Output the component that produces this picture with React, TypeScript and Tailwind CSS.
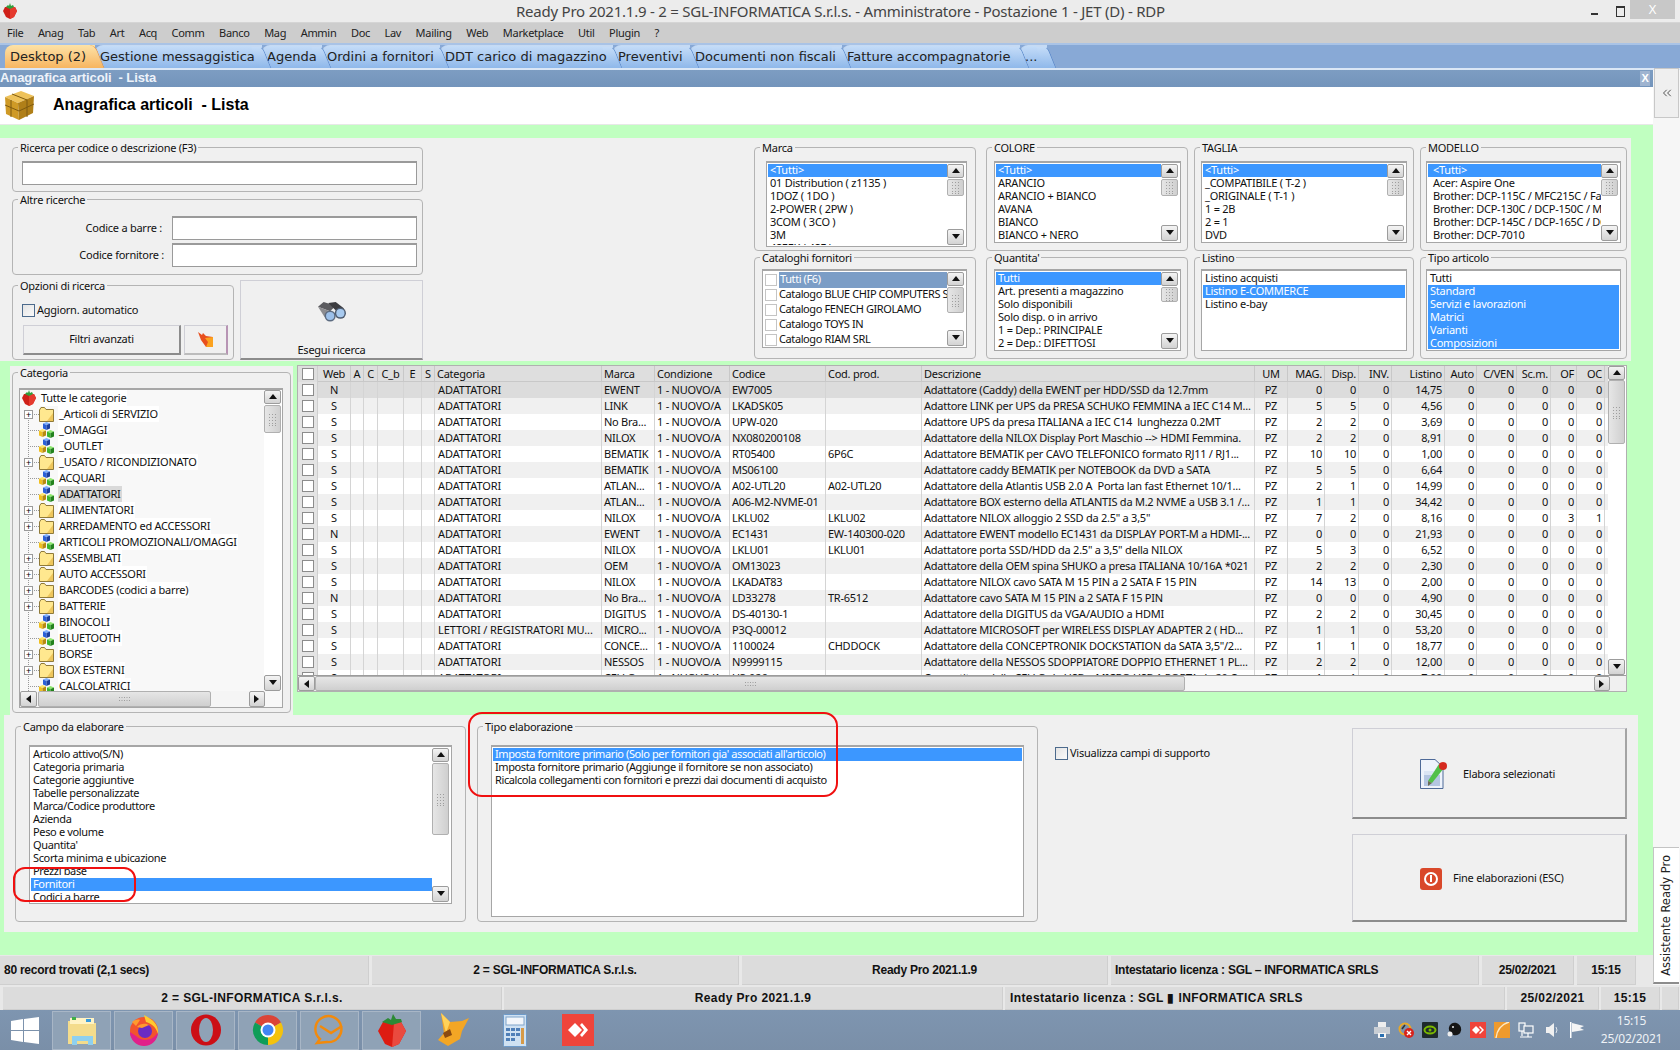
import React from "react";
import { ChevronsLeft } from "lucide-react";

const SEL = "bg-[#3c97ff] text-white";
const ARIAL = "[font-family:'Liberation_Sans',Arial,sans-serif]";

const menus = ["File", "Anag", "Tab", "Art", "Acq", "Comm", "Banco", "Mag", "Ammin", "Doc", "Lav", "Mailing", "Web", "Marketplace", "Util", "Plugin", "?"];

const tabs = [
  { t: "Gestione messaggistica", w: "w-[167px] z-[8]" },
  { t: "Agenda", w: "w-[60px] z-[7]" },
  { t: "Ordini a fornitori", w: "w-[118px] z-[6]" },
  { t: "DDT carico di magazzino", w: "w-[173px] z-[5]" },
  { t: "Preventivi", w: "w-[77px] z-[4]" },
  { t: "Documenti non fiscali", w: "w-[152px] z-[3]" },
  { t: "Fatture accompagnatorie", w: "w-[178px] z-[2]" },
  { t: "...", w: "w-[27px] z-[1]" },
];

const treeItems: [string, boolean][] = [
  ["_Articoli di SERVIZIO", true],
  ["_OMAGGI", false],
  ["_OUTLET", false],
  ["_USATO / RICONDIZIONATO", true],
  ["ACQUARI", false],
  ["ADATTATORI", false],
  ["ALIMENTATORI", true],
  ["ARREDAMENTO ed ACCESSORI", true],
  ["ARTICOLI PROMOZIONALI/OMAGGI", false],
  ["ASSEMBLATI", true],
  ["AUTO ACCESSORI", true],
  ["BARCODES (codici a barre)", true],
  ["BATTERIE", true],
  ["BINOCOLI", false],
  ["BLUETOOTH", false],
  ["BORSE", true],
  ["BOX ESTERNI", true],
  ["CALCOLATRICI", false],
];

// web, categoria, marca, codice, cod.prod, descrizione, mag, disp, listino, of, oc
const rows: string[][] = [
  ["N", "ADATTATORI", "EWENT", "EW7005", "", "Adattatore (Caddy) della EWENT per HDD/SSD da 12.7mm", "0", "0", "14,75", "0", "0"],
  ["S", "ADATTATORI", "LINK", "LKADSK05", "", "Adattore LINK per UPS da PRESA SCHUKO FEMMINA a IEC C14 M...", "5", "5", "4,56", "0", "0"],
  ["S", "ADATTATORI", "No Bra...", "UPW-020", "", "Adattore UPS da presa ITALIANA a IEC C14  lunghezza 0.2MT", "2", "2", "3,69", "0", "0"],
  ["S", "ADATTATORI", "NILOX", "NX080200108", "", "Adattatore della NILOX Display Port Maschio --> HDMI Femmina.", "2", "2", "8,91", "0", "0"],
  ["S", "ADATTATORI", "BEMATIK", "RT05400", "6P6C", "Adattatore BEMATIK per CAVO TELEFONICO formato RJ11 / RJ1...", "10", "10", "1,00", "0", "0"],
  ["S", "ADATTATORI", "BEMATIK", "MS06100", "", "Adattatore caddy BEMATIK per NOTEBOOK da DVD a SATA", "5", "5", "6,64", "0", "0"],
  ["S", "ADATTATORI", "ATLAN...", "A02-UTL20", "A02-UTL20", "Adattatore della Atlantis USB 2.0 A  Porta lan fast Ethernet 10/1...", "2", "1", "14,99", "0", "0"],
  ["S", "ADATTATORI", "ATLAN...", "A06-M2-NVME-01", "", "Adattatore BOX esterno della ATLANTIS da M.2 NVME a USB 3.1 /...", "1", "1", "34,42", "0", "0"],
  ["S", "ADATTATORI", "NILOX", "LKLU02", "LKLU02", 'Adattatore NILOX alloggio 2 SSD da 2.5" a 3,5"', "7", "2", "8,16", "3", "1"],
  ["N", "ADATTATORI", "EWENT", "EC1431", "EW-140300-020", "Adattatore EWENT modello EC1431 da DISPLAY PORT-M a HDMI-...", "0", "0", "21,93", "0", "0"],
  ["S", "ADATTATORI", "NILOX", "LKLU01", "LKLU01", 'Adattatore porta SSD/HDD da 2.5" a 3,5" della NILOX', "5", "3", "6,52", "0", "0"],
  ["S", "ADATTATORI", "OEM", "OM13023", "", "Adattatore della OEM spina SHUKO a presa ITALIANA 10/16A *021", "2", "2", "2,30", "0", "0"],
  ["S", "ADATTATORI", "NILOX", "LKADAT83", "", "Adattatore NILOX cavo SATA M 15 PIN a 2 SATA F 15 PIN", "14", "13", "2,00", "0", "0"],
  ["N", "ADATTATORI", "No Bra...", "LD33278", "TR-6512", "Adattatore cavo SATA M 15 PIN a 2 SATA F 15 PIN", "0", "0", "4,90", "0", "0"],
  ["S", "ADATTATORI", "DIGITUS", "DS-40130-1", "", "Adattatore della DIGITUS da VGA/AUDIO a HDMI", "2", "2", "30,45", "0", "0"],
  ["S", "LETTORI / REGISTRATORI MU...", "MICRO...", "P3Q-00012", "", "Adattatore MICROSOFT per WIRELESS DISPLAY ADAPTER 2 ( HD...", "1", "1", "53,20", "0", "0"],
  ["S", "ADATTATORI", "CONCE...", "1100024", "CHDDOCK", 'Adattatore della CONCEPTRONIK DOCKSTATION da SATA 3,5"/2...', "1", "1", "18,77", "0", "0"],
  ["S", "ADATTATORI", "NESSOS", "N9999115", "", "Adattatore della NESSOS SDOPPIATORE DOPPIO ETHERNET 1 PL...", "2", "2", "12,00", "0", "0"],
  ["S", "ADATTATORI", "CELLO", "U3-026", "", "Convertitore della CELLO da USB a MICRO USB 1 PORTA da 20 C...", "1", "1", "7,00", "0", "0"],
];

const COLS = "grid grid-cols-[33px_13px_14px_26px_18px_13px_167px_53px_75px_96px_96px_333px_33px_37px_34px_33px_53px_32px_40px_34px_26px_28px]";

const Grip = ({ vertical }: { vertical?: boolean }) => (
  <svg width={vertical ? 9 : 13} height={vertical ? 13 : 6} className="opacity-60">
    {(vertical ? [1, 4, 7] : [1, 3.5, 6, 8.5, 11]).map((x) =>
      (vertical ? [1, 4, 7, 10, 12] : [1, 4]).map((y) => <rect key={x + "-" + y} x={x} y={y} width="1" height="1" fill="#777" />)
    )}
  </svg>
);

const Arrow = ({ dir }: { dir: "up" | "down" | "left" | "right" }) => {
  const p = {
    up: "0,6 8,6 4,1",
    down: "0,1 8,1 4,6",
    left: "6,0 6,8 1,4",
    right: "1,0 1,8 6,4",
  }[dir];
  return (
    <svg width="8" height="8" viewBox="0 0 8 8">
      <polygon points={p} fill="#111" />
    </svg>
  );
};

const SBtn = ({ dir, className }: { dir: "up" | "down" | "left" | "right"; className: string }) => (
  <div className={"flex shrink-0 items-center justify-center rounded-[2px] border border-[#9c9c9c] bg-gradient-to-b from-[#f4f4f4] to-[#d3d3d3] " + className}>
    <Arrow dir={dir} />
  </div>
);

const VScroll = ({ thumb }: { thumb: string }) => (
  <div className="flex w-[18px] shrink-0 flex-col bg-white">
    <SBtn dir="up" className="h-[14px] w-[17px]" />
    <div className={"flex w-[17px] items-center justify-center rounded-[2px] border border-[#b0b0b0] bg-gradient-to-r from-[#e6e6e6] to-[#cfcfcf] " + thumb}>
      <Grip vertical />
    </div>
    <div className="flex-1" />
    <SBtn dir="down" className="h-[16px] w-[17px]" />
  </div>
);

const HScroll = ({ thumb, className }: { thumb: string; className: string }) => (
  <div className={"flex items-center bg-[#f5f5f5] " + className}>
    <SBtn dir="left" className="h-full w-[17px]" />
    <div className={"flex h-full items-center justify-center rounded-[2px] border border-[#b0b0b0] bg-gradient-to-b from-[#e6e6e6] to-[#cfcfcf] " + thumb}>
      <Grip />
    </div>
    <div className="flex-1" />
    <SBtn dir="right" className="h-full w-[16px]" />
  </div>
);

const ListBox = ({
  items,
  sel = [],
  className,
  thumb,
  pad = "pl-[2px]",
}: {
  items: string[];
  sel?: number[];
  className: string;
  thumb?: string;
  pad?: string;
}) => (
  <div className={"flex overflow-hidden border border-[#a6a6a6] border-t-2 bg-white p-[1px] " + className}>
    <div className="min-w-0 flex-1 overflow-hidden">
      {items.map((it, i) => (
        <div key={i} className={"h-[13px] whitespace-pre leading-[12px] " + pad + " " + (sel.includes(i) ? SEL : "text-[#111]")}>
          {it}
        </div>
      ))}
    </div>
    {thumb && <VScroll thumb={thumb} />}
  </div>
);

const Group = ({ title, className, children }: { title: string; className: string; children?: React.ReactNode }) => (
  <fieldset className={"rounded-[4px] border border-[#b4b4b4] " + className}>
    <legend className="ml-[5px] px-[2px] leading-[13px] text-[#111]">{title}</legend>
    {children}
  </fieldset>
);

const CheckOutline = () => <span className="block h-[13px] w-[13px] shrink-0 border border-[#4c6a8c] bg-gradient-to-br from-[#e4e4e4] to-[#fafafa]" />;

const Strawberry = ({ s = 16 }: { s?: number }) => (
  <svg width={s} height={s} viewBox="0 0 16 16">
    <polygon points="3,4 13,4 15,8 12,14 8,16 4,14 1,8" fill="#cf2018" />
    <polygon points="8,4 13,4 15,8 12,14 8,16" fill="#e53a2e" />
    <polygon points="4,4 6,2 7,3 8,0 9,3 11,2 12,4 8,6" fill="#2f9e3b" />
  </svg>
);

const BoxIcon = () => (
  <svg width="32" height="31" viewBox="0 0 32 31">
    <polygon points="2,7 18,1 31,6 15,13" fill="#eec25a" />
    <polygon points="2,7 15,13 16,30 3,24" fill="#cf9a26" />
    <polygon points="15,13 31,6 30,23 16,30" fill="#b07f18" />
    <path d="M9 4 L24 10 L24 27 M2 15 L16 21 L31 14 M8 10 L8 27" fill="none" stroke="#7e5a10" strokeWidth="1" />
  </svg>
);

const Binoculars = () => (
  <svg width="32" height="22" viewBox="0 0 32 22">
    <polygon points="1,5 7,0 20,4 14,10" fill="#5b5b5f" />
    <polygon points="12,1 20,0 29,7 22,11" fill="#3c3c40" />
    <polygon points="1,5 14,10 18,17 8,16" fill="#8c8c90" />
    <circle cx="14" cy="15" r="6" fill="#5c6b80" />
    <circle cx="14" cy="15" r="4.4" fill="#9cc0ea" />
    <circle cx="25" cy="12" r="6" fill="#4f5d72" />
    <circle cx="25" cy="12" r="4.4" fill="#a8caef" />
  </svg>
);

const FlameArrow = () => (
  <svg width="16" height="15" viewBox="0 0 16 15">
    <polygon points="0,0 4,3 5,1 8,4 15,5 15,15 8,15 3,8" fill="#e84f1e" />
    <polygon points="7,6 15,5 15,15 8,15 10,10" fill="#fba21f" />
  </svg>
);

const FolderIcon = () => (
  <svg width="15" height="15" viewBox="0 0 15 15">
    <path d="M0.5 3 L0.5 14.5 L14.5 14.5 L14.5 2.5 L7 2.5 L5.5 0.5 L2 0.5 Z" fill="#ffe88f" stroke="#8f7a3a" strokeWidth="1" />
    <polygon points="8,14 14,14 14,6" fill="#eec65c" />
  </svg>
);

const Cube = ({ x, y, top, left, right }: { x: number; y: number; top: string; left: string; right: string }) => (
  <g transform={`translate(${x} ${y})`}>
    <polygon points="0,1.5 3.5,0 7,1.5 3.5,3" fill={top} />
    <polygon points="0,1.5 3.5,3 3.5,8 0,6.5" fill={left} />
    <polygon points="3.5,3 7,1.5 7,6.5 3.5,8" fill={right} />
  </g>
);

const Cubes = () => (
  <svg width="15" height="16" viewBox="0 0 15 16">
    <Cube x={4} y={0} top="#7fb0ff" left="#2a60d8" right="#1c3f9e" />
    <Cube x={0} y={7} top="#ffe56a" left="#f0c020" right="#b88a10" />
    <Cube x={8} y={8} top="#8fe870" left="#3db52f" right="#22821c" />
  </svg>
);

const DocPencil = () => (
  <svg width="28" height="30" viewBox="0 0 28 30">
    <path d="M0.5 0.5 L15 0.5 L23 8 L23 29.5 L0.5 29.5 Z" fill="#eef3fb" stroke="#4e6a98" />
    <rect x="4" y="12" width="16" height="15" fill="#b4c6e2" />
    <rect x="4" y="12" width="16" height="4" fill="#dbe5f4" />
    <polygon points="19,5 24,9 12,24 8,22" fill="#52c04a" />
    <polygon points="8,22 12,24 8,27" fill="#6b6b55" />
    <circle cx="23" cy="7" r="4" fill="#d52a1e" />
  </svg>
);

const PowerBtn = () => (
  <svg width="22" height="22" viewBox="0 0 22 22">
    <rect width="22" height="22" rx="3" fill="#d9482a" />
    <circle cx="11" cy="11" r="6" fill="none" stroke="#fff" strokeWidth="2" />
    <rect x="10" y="7" width="2" height="7" fill="#fff" />
  </svg>
);

const TaskBtn = ({ children }: { children: React.ReactNode }) => (
  <div className="flex h-[39px] w-[59px] items-center justify-center border border-[#a8b6c6] bg-[#8fa2b6]">{children}</div>
);

const Tray = ({ children }: { children: React.ReactNode }) => <div className="flex h-4 w-4 items-center justify-center">{children}</div>;

const StatusCell = ({ w, children, className = "justify-center" }: { w: string; children?: React.ReactNode; className?: string }) => (
  <div className={"flex h-full items-center bg-[#dcdcdc] border-b border-r border-[#cfcfcf] text-[12px] font-bold text-[#111] " + ARIAL + " " + w + " " + className}>{children}</div>
);

export default function App() {
  return (
    <div className="relative flex h-[1050px] w-[1680px] flex-col overflow-hidden bg-[#ececec] [font-family:'Noto_Sans',sans-serif] text-[11px] tracking-[-0.25px] text-[#111]">
      {/* Titolo finestra */}
      <div className="flex h-[22px] shrink-0 items-center bg-[#ececec]">
        <div className="ml-[2px] w-[514px]">
          <Strawberry />
        </div>
        <div className="w-[1075px] whitespace-nowrap text-[15px] tracking-[-0.23px] text-[#444]">Ready Pro 2021.1.9 - 2 = SGL-INFORMATICA S.r.l.s. - Amministratore - Postazione 1 - JET (D) - RDP</div>
        <div className="mt-[6px] h-[2px] w-[7px] bg-[#333]" />
        <div className="ml-[18px] h-[11px] w-[9px] border border-t-2 border-[#333]" />
        <div className={"ml-[5px] flex h-[19px] w-[45px] self-start items-center justify-center bg-[#c8c8c8] text-[12px] text-white " + ARIAL}>X</div>
      </div>
      {/* Menu */}
      <div className="flex h-[21px] shrink-0 items-center gap-[14.5px] border-t border-[#d5d5d5] bg-[#cdcdcd] pl-[7px] text-[11px] tracking-[-0.3px] text-[#222]">
        {menus.map((m) => (
          <span key={m}>{m}</span>
        ))}
      </div>
      {/* Tabs */}
      <div className="flex h-[27px] shrink-0 items-end border-t-2 border-b-2 border-t-[#a9c3e6] border-b-[#dbe7f6] bg-[#88a9d6] pl-[5px] [font-family:'DejaVu_Sans',sans-serif] text-[13px] tracking-normal">
        <div className="relative z-[9] flex h-[23px] w-[90px] items-center rounded-tl-[8px] bg-gradient-to-b from-[#fde2a6] to-[#f7b560] pl-[5px] text-[#222] after:absolute after:inset-y-0 after:right-[-5px] after:w-[12px] after:skew-x-[22deg] after:rounded-tr-[6px] after:border-r after:border-[#e8974a] after:bg-gradient-to-b after:from-[#fde2a6] after:to-[#f7b560] after:content-['']">
          <span className="relative z-10 whitespace-nowrap">Desktop (2)</span>
        </div>
        {tabs.map((t) => (
          <div key={t.t} className={"relative flex h-[23px] items-center rounded-tl-[8px] border-t border-[#c6daf3] bg-gradient-to-b from-[#c4dcf8] to-[#8fb8ea] pl-[5px] text-[#222] after:absolute after:inset-y-0 after:right-[-5px] after:w-[12px] after:skew-x-[22deg] after:rounded-tr-[6px] after:border-r after:border-t after:border-[#5f8ccc] after:border-t-[#c6daf3] after:bg-gradient-to-b after:from-[#c4dcf8] after:to-[#8fb8ea] after:content-[''] " + t.w}>
            <span className="relative z-10 whitespace-nowrap">{t.t}</span>
          </div>
        ))}
      </div>

      <div className="flex h-[915px] shrink-0 bg-white">
        <div className="flex w-[1653px] flex-col">
          {/* Testata */}
          <div className={"flex h-[17px] shrink-0 items-center justify-between bg-gradient-to-b from-[#7d9dc2] to-[#7394bb] pb-[1px] text-[13px] font-bold tracking-[-0.1px] text-[#eef3fa] " + ARIAL}>
            <span className="whitespace-pre">Anagrafica articoli  - Lista</span>
            <span className="mr-[3px] h-[15px] w-[10px] bg-[#9fb4d0] text-center text-[11px] leading-[15px] text-white">X</span>
          </div>
          <div className="flex h-[38px] shrink-0 items-center border-b border-[#e8e8e8] bg-white pb-[1px] pl-[3px]">
            <BoxIcon />
            <span className={"ml-[18px] whitespace-pre text-[16px] font-bold tracking-normal text-black " + ARIAL}>Anagrafica articoli  - Lista</span>
          </div>

          <div className="flex flex-1 flex-col bg-[#c0ffc0]">
            {/* Filtri */}
            <div className="mt-[13px] flex h-[223px] w-[1631px] shrink-0 bg-[#f0f0f0] pl-[12px] pt-[3px]">
              <div className="flex w-[411px] shrink-0 flex-col">
                <Group title="Ricerca per codice o descrizione (F3)" className="h-[51px] w-[411px]">
                  <input readOnly className="ml-[9px] mt-[7px] block h-[24px] w-[395px] border border-[#9a9a9a] border-t-2 bg-white" />
                </Group>
                <Group title="Altre ricerche" className="mt-[1px] h-[82px] w-[411px]">
                  <div className="mt-[10px] flex items-center justify-end pr-[5px]">
                    <span className="mr-[10px]">Codice a barre :</span>
                    <input readOnly className="h-[24px] w-[245px] border border-[#9a9a9a] border-t-2 bg-white" />
                  </div>
                  <div className="mt-[3px] flex items-center justify-end pr-[5px]">
                    <span className="mr-[8px]">Codice fornitore :</span>
                    <input readOnly className="h-[24px] w-[245px] border border-[#9a9a9a] border-t-2 bg-white" />
                  </div>
                </Group>
                <div className="mt-[4px] flex">
                  <Group title="Opzioni di ricerca" className="h-[81px] w-[222px]">
                    <div className="ml-[9px] mt-[10px] flex items-center gap-[2px]">
                      <CheckOutline />
                      <span>Aggiorn. automatico</span>
                    </div>
                    <div className="ml-[10px] mt-[6px] flex gap-[3px]">
                      <div className="flex h-[30px] w-[158px] items-center justify-center border border-[#cfcfd6] border-b-2 border-r-2 border-b-[#8c8c8c] border-r-[#8c8c8c]">Filtri avanzati</div>
                      <div className="flex h-[30px] w-[44px] items-center justify-center border border-[#cfcfd6] border-b-2 border-r-2 border-b-[#bcbcbc] border-r-[#b794b4]">
                        <FlameArrow />
                      </div>
                    </div>
                  </Group>
                  <div className="ml-[6px] mt-[1px] flex h-[80px] w-[183px] flex-col items-center border border-[#cfcfd6] border-b-2 border-b-[#8c8c8c] pt-[21px]">
                    <Binoculars />
                    <span className="mt-[19px]">Esegui ricerca</span>
                  </div>
                </div>
              </div>

              <div className="ml-[331px] flex flex-col">
                <div className="flex">
                  <Group title="Marca" className="h-[110px] w-[222px]">
                    <ListBox className="ml-[11px] mt-[7px] h-[86px] w-[201px]" thumb="mt-[1px] h-[17px]" sel={[0]} items={["<Tutti>", "01 Distribution ( z1135 )", "1DOZ ( 1DO )", "2-POWER ( 2PW )", "3COM ( 3CO )", "3M", "4SEEK ( 4SE )"]} />
                  </Group>
                  <Group title="COLORE" className="ml-[10px] h-[110px] w-[202px]">
                    <ListBox className="ml-[7px] mt-[7px] h-[82px] w-[187px]" thumb="mt-[1px] h-[17px]" sel={[0]} items={["<Tutti>", "ARANCIO", "ARANCIO + BIANCO", "AVANA", "BIANCO", "BIANCO + NERO"]} />
                  </Group>
                  <Group title="TAGLIA" className="ml-[6px] h-[110px] w-[220px]">
                    <ListBox className="ml-[6px] mt-[7px] h-[82px] w-[206px]" thumb="mt-[1px] h-[17px]" sel={[0]} items={["<Tutti>", "_COMPATIBILE ( T-2 )", "_ORIGINALE ( T-1 )", "1 = 2B", "2 = 1", "DVD"]} />
                  </Group>
                  <Group title="MODELLO" className="ml-[6px] h-[110px] w-[207px]">
                    <ListBox className="ml-[5px] mt-[7px] h-[82px] w-[195px]" thumb="mt-[1px] h-[17px]" sel={[0]} pad="pl-[5px]" items={["<Tutti>", "Acer: Aspire One", "Brother: DCP-115C / MFC215C / Fax", "Brother: DCP-130C / DCP-150C / MFC", "Brother: DCP-145C / DCP-165C / DCP", "Brother: DCP-7010"]} />
                  </Group>
                </div>
                <div className="flex">
                  <Group title="Cataloghi fornitori" className="h-[108px] w-[222px]">
                    <div className="ml-[7px] mt-[5px] flex h-[79px] w-[205px] overflow-hidden border border-[#a6a6a6] border-t-2 bg-white p-[1px]">
                      <div className="min-w-0 flex-1 overflow-hidden pl-[1px] tracking-[-0.4px]">
                        {["Tutti (F6)", "Catalogo BLUE CHIP COMPUTERS S", "Catalogo FENECH GIROLAMO", "Catalogo TOYS IN", "Catalogo RIAM SRL"].map((c, i) => (
                          <div key={c} className="flex h-[15px] items-center gap-[2px] whitespace-nowrap">
                            <span className="h-[12px] w-[12px] shrink-0 border border-[#c4c4c4] bg-white" />
                            <span className={i === 0 ? "flex-1 bg-[#7b9dc6] pl-[1px] text-white" : ""}>{c}</span>
                          </div>
                        ))}
                      </div>
                      <VScroll thumb="mt-[1px] h-[26px]" />
                    </div>
                  </Group>
                  <Group title="Quantita'" className="ml-[10px] h-[108px] w-[202px]">
                    <ListBox className="ml-[7px] mt-[5px] h-[82px] w-[187px]" thumb="mt-[1px] h-[15px]" sel={[0]} items={["Tutti", "Art. presenti a magazzino", "Solo disponibili", "Solo disp. o in arrivo", "1 = Dep.: PRINCIPALE", "2 = Dep.: DIFETTOSI"]} />
                  </Group>
                  <Group title="Listino" className="ml-[6px] h-[108px] w-[220px]">
                    <ListBox className="ml-[6px] mt-[5px] h-[82px] w-[206px]" sel={[1]} items={["Listino acquisti", "Listino E-COMMERCE", "Listino e-bay"]} />
                  </Group>
                  <Group title="Tipo articolo" className="ml-[6px] h-[108px] w-[207px]">
                    <ListBox className="ml-[5px] mt-[5px] h-[82px] w-[195px]" sel={[1, 2, 3, 4, 5]} items={["Tutti", "Standard", "Servizi e lavorazioni", "Matrici", "Varianti", "Composizioni"]} />
                  </Group>
                </div>
              </div>
            </div>

            {/* Categorie + griglia */}
            <div className="mt-[4px] flex h-[350px] shrink-0">
              <div className="ml-[10px] mt-[1px] h-[349px] w-[283px] bg-[#f0f0f0] pl-[2px]">
                <Group title="Categoria" className="h-[347px] w-[279px]">
                  <div className="ml-[6px] mt-[9px] flex h-[320px] w-[264px] flex-col overflow-hidden border border-[#a6a6a6] border-t-2 bg-[#f8f8f8]">
                    <div className="flex min-h-0 flex-1 overflow-hidden">
                      <div className="relative min-w-0 flex-1">
                        <div className="absolute bottom-0 left-[8px] top-[20px] border-l border-dotted border-[#999]" />
                        <div className="flex h-4 items-center pl-[1px]">
                          <Strawberry s={16} />
                          <span className="ml-[3px] bg-white px-[1px]">Tutte le categorie</span>
                        </div>
                        {treeItems.map(([t, folder]) => (
                          <div key={t} className="flex h-4 items-center">
                            <div className="relative flex w-[19px] shrink-0 items-center">
                              <span className="ml-[8px] w-[11px] border-t border-dotted border-[#999]" />
                              {folder && <span className="absolute left-[4px] top-[-4px] flex h-[9px] w-[9px] items-center justify-center border border-[#9a9a9a] bg-white text-[9px] leading-none text-black">+</span>}
                            </div>
                            {folder ? <FolderIcon /> : <Cubes />}
                            <span className={"ml-[4px] whitespace-nowrap px-[1px] " + (t === "ADATTATORI" ? "bg-[#d9d9d9]" : "bg-white")}>{t}</span>
                          </div>
                        ))}
                      </div>
                      <VScroll thumb="mt-[1px] h-[28px]" />
                    </div>
                    <HScroll className="h-[16px] w-[245px] shrink-0" thumb="ml-[1px] w-[173px]" />
                  </div>
                </Group>
              </div>

              <div className="ml-[4px] flex h-[327px] w-[1330px] flex-col border border-[#b0b0b0] bg-white">
                <div className="flex h-[309px] shrink-0">
                  <div className="h-full w-[1312px] overflow-hidden">
                    <div className="flex h-[16px] bg-[#dedede]">
                      <div className="flex w-[20px] shrink-0 items-center justify-center border-r border-[#cfcfcf]">
                        <span className="h-[12px] w-[12px] border border-[#8c8c8c] bg-white" />
                      </div>
                      <div className={COLS}>
                        {["Web", "A", "C", "C_b", "E", "S", "Categoria", "Marca", "Condizione", "Codice", "Cod. prod.", "Descrizione", "UM", "MAG.", "Disp.", "INV.", "Listino", "Auto", "C/VEN", "Sc.m.", "OF", "OC"].map((h, i) => (
                          <div key={h} className={"overflow-hidden whitespace-nowrap border-r border-b border-[#c8c8c8] leading-[15px] " + (i < 6 || i === 12 ? "text-center" : i > 12 ? "pr-[2px] text-right" : "pl-[2px]")}>
                            {h}
                          </div>
                        ))}
                      </div>
                    </div>
                    {rows.map((r, i) => (
                      <div key={i} className={"flex h-4 " + (i === 0 ? "bg-[#dcdcdc]" : i % 2 === 1 ? "bg-[#f0f0f0]" : "bg-white")}>
                        <div className="flex w-[20px] shrink-0 items-center justify-center border-r border-[#cfcfcf] bg-[#e4e4e4]">
                          <span className="h-[12px] w-[12px] border border-[#8c8c8c] bg-white" />
                        </div>
                        <div className={COLS + " leading-[16px]"}>
                          <div className="border-r border-[#d4d4d4] text-center">{r[0]}</div>
                          <div className="border-r border-[#d4d4d4]" />
                          <div className="border-r border-[#d4d4d4]" />
                          <div className="border-r border-[#d4d4d4]" />
                          <div className="border-r border-[#d4d4d4]" />
                          <div className="border-r border-[#d4d4d4]" />
                          <div className="overflow-hidden whitespace-nowrap border-r border-[#d4d4d4] pl-[3px] tracking-[-0.1px]">{r[1]}</div>
                          <div className="overflow-hidden whitespace-nowrap border-r border-[#d4d4d4] pl-[2px]">{r[2]}</div>
                          <div className="overflow-hidden whitespace-nowrap border-r border-[#d4d4d4] pl-[2px]">1 - NUOVO/A</div>
                          <div className="overflow-hidden whitespace-nowrap border-r border-[#d4d4d4] pl-[2px]">{r[3]}</div>
                          <div className="overflow-hidden whitespace-nowrap border-r border-[#d4d4d4] pl-[2px]">{r[4]}</div>
                          <div className="overflow-hidden whitespace-pre border-r border-[#d4d4d4] pl-[2px]">{r[5]}</div>
                          <div className="border-r border-[#d4d4d4] text-center">PZ</div>
                          <div className="border-r border-[#d4d4d4] pr-[2px] text-right">{r[6]}</div>
                          <div className="border-r border-[#d4d4d4] pr-[2px] text-right">{r[7]}</div>
                          <div className="border-r border-[#d4d4d4] pr-[2px] text-right">0</div>
                          <div className="border-r border-[#d4d4d4] pr-[2px] text-right">{r[8]}</div>
                          <div className="border-r border-[#d4d4d4] pr-[2px] text-right">0</div>
                          <div className="border-r border-[#d4d4d4] pr-[2px] text-right">0</div>
                          <div className="border-r border-[#d4d4d4] pr-[2px] text-right">0</div>
                          <div className="border-r border-[#d4d4d4] pr-[2px] text-right">{r[9]}</div>
                          <div className="border-r border-[#d4d4d4] pr-[2px] text-right">{r[10]}</div>
                        </div>
                      </div>
                    ))}
                  </div>
                  <VScroll thumb="h-[64px]" />
                </div>
                <div className="flex h-[16px] shrink-0 border-t border-[#9c9c9c] bg-[#f0f0f0]">
                  <HScroll className="h-full w-[1312px]" thumb="w-[870px]" />
                </div>
              </div>
            </div>

            {/* Elaborazione */}
            <div className="ml-[4px] flex h-[217px] w-[1634px] shrink-0 bg-[#f0f0f0] pl-[11px] pt-[5px]">
              <Group title="Campo da elaborare" className="h-[202px] w-[451px]">
                <ListBox
                  className="ml-[13px] mt-[12px] h-[159px] w-[423px] tracking-[-0.35px]"
                  thumb="mt-[1px] h-[72px]"
                  sel={[10]}
                  items={["Articolo attivo(S/N)", "Categoria primaria", "Categorie aggiuntive", "Tabelle personalizzate", "Marca/Codice produttore", "Azienda", "Peso e volume", "Quantita'", "Scorta minima e ubicazione", "Prezzi base", "Fornitori", "Codici a barre"]}
                />
              </Group>
              <Group title="Tipo elaborazione" className="ml-[11px] h-[202px] w-[561px]">
                <ListBox
                  className="ml-[13px] mt-[12px] h-[172px] w-[533px] tracking-[-0.4px]"
                  sel={[0]}
                  items={["Imposta fornitore primario (Solo per fornitori gia' associati all'articolo)", "Imposta fornitore primario (Aggiunge il fornitore se non associato)", "Ricalcola collegamenti con fornitori e prezzi dai documenti di acquisto"]}
                />
              </Group>
              <div className="ml-[17px] mt-[27px] flex h-[13px] w-[297px] items-center gap-[2px]">
                <CheckOutline />
                <span>Visualizza campi di supporto</span>
              </div>
              <div className="flex flex-col gap-[15px] pt-[8px]">
                <div className="flex h-[91px] w-[275px] items-center gap-[15px] border border-[#cfcfd6] border-b-2 border-b-[#8c8c8c] border-r-2 border-r-[#a4a4a4] pl-[67px] pt-[2px]">
                  <DocPencil />
                  <span>Elabora selezionati</span>
                </div>
                <div className="flex h-[88px] w-[275px] items-center gap-[11px] border border-[#cfcfd6] border-b-2 border-b-[#8c8c8c] border-r-2 border-r-[#a4a4a4] pl-[67px] pt-[2px]">
                  <PowerBtn />
                  <span>Fine elaborazioni (ESC)</span>
                </div>
              </div>
            </div>
            <div className="flex-1" />
          </div>

          {/* Stato applicazione */}
          <div className="flex h-[30px] shrink-0 gap-[3px] bg-[#e8e8e8] pt-[1px] tracking-[-0.25px]">
            <StatusCell w="w-[369px]" className="justify-start pl-[4px]">80 record trovati (2,1 secs)</StatusCell>
            <StatusCell w="w-[367px]">2 = SGL-INFORMATICA S.r.l.s.</StatusCell>
            <StatusCell w="w-[366px]">Ready Pro 2021.1.9</StatusCell>
            <StatusCell w="w-[368px]" className="justify-start pl-[4px]">Intestatario licenza : SGL – INFORMATICA SRLS</StatusCell>
            <StatusCell w="w-[92px]">25/02/2021</StatusCell>
            <StatusCell w="w-[59px]">15:15</StatusCell>
          </div>
        </div>

        {/* Colonna destra */}
        <div className="flex w-[27px] flex-col bg-[#f6f6f6]">
          <div className="-mt-[2px] ml-[1px] flex h-[50px] w-[25px] items-center justify-center border border-[#c8c8c8] bg-[#efefef] text-[#111]">
            <ChevronsLeft size={14} strokeWidth={1.2} />
          </div>
          <div className="flex-1" />
          <div className="flex h-[137px] w-[26px] items-center justify-center border-b-2 border-l border-t border-[#c4c4c4] border-b-[#8c8c8c] bg-white">
            <span className="rotate-180 whitespace-nowrap [writing-mode:vertical-rl] [font-family:'DejaVu_Sans',sans-serif] text-[11.5px] tracking-normal text-[#222]">Assistente Ready Pro</span>
          </div>
          <div className="h-[1px]" />
        </div>
      </div>

      {/* Stato sistema */}
      <div className="flex h-[25px] shrink-0 gap-[2px] bg-[#e8e8e8] pl-[3px] pt-[2px] tracking-[0.4px]">
        <StatusCell w="w-[499px]">2 = SGL-INFORMATICA S.r.l.s.</StatusCell>
        <StatusCell w="w-[499px]">Ready Pro 2021.1.9</StatusCell>
        <StatusCell w="w-[500px]" className="justify-start pl-[5px]">Intestatario licenza : SGL ▮ INFORMATICA SRLS</StatusCell>
        <StatusCell w="w-[92px]">25/02/2021</StatusCell>
        <StatusCell w="w-[59px]">15:15</StatusCell>
        <StatusCell w="w-[17px]" />
      </div>

      {/* Barra applicazioni */}
      <div className="flex h-[40px] shrink-0 items-center bg-gradient-to-b from-[#7e95b0] to-[#7a8fa8] text-white">
        <div className="flex w-[52px] shrink-0 justify-start pl-[11px]">
          <svg width="28" height="27" viewBox="0 0 28 27">
            <polygon points="0,4 12,2 12,13 0,13" fill="#fff" />
            <polygon points="13,2 28,0 28,13 13,13" fill="#fff" />
            <polygon points="0,14 12,14 12,25 0,23" fill="#fff" />
            <polygon points="13,14 28,14 28,27 13,25" fill="#fff" />
          </svg>
        </div>
        <div className="flex gap-[3px]">
          <TaskBtn>
            <svg width="32" height="32" viewBox="0 0 32 32">
              <path d="M2 7 L12 7 L14 9 L30 9 L30 30 L2 30 Z" fill="#f4dc8c" />
              <rect x="4" y="4" width="24" height="6" fill="#fff3c4" />
              <rect x="6" y="3" width="4" height="3" fill="#3fae49" />
              <rect x="20" y="5" width="5" height="3" fill="#3a9bdc" />
              <path d="M6 31 L6 22 L27 22 L27 31 L22 31 L22 27 L11 27 L11 31 Z" fill="#8fd0ef" />
            </svg>
          </TaskBtn>
          <TaskBtn>
            <svg width="32" height="32" viewBox="0 0 32 32">
              <circle cx="16" cy="17" r="14" fill="#f2542d" />
              <path d="M2 18 A14 14 0 0 0 30 18 A14 14 0 0 1 8 22 Z" fill="#e0218a" />
              <path d="M16 1 C24 5 31 10 30 20 C28 12 22 9 18 8 Z" fill="#ffcb2f" />
              <path d="M4 8 C6 6 10 5 12 6 L8 12 Z" fill="#ff9a2e" />
              <circle cx="17" cy="17" r="7" fill="#6a2bc4" />
              <path d="M9 13 C12 9 18 9 21 11 L14 14 Z" fill="#ff9a2e" />
            </svg>
          </TaskBtn>
          <TaskBtn>
            <svg width="32" height="32" viewBox="0 0 32 32">
              <ellipse cx="16" cy="16" rx="15" ry="15.5" fill="#cc0f16" />
              <ellipse cx="16" cy="16" rx="7" ry="12" fill="#8fa2b6" />
            </svg>
          </TaskBtn>
          <TaskBtn>
            <svg width="32" height="32" viewBox="0 0 32 32">
              <path d="M16 16 L3 8.5 A15 15 0 0 1 29 8.5 Z" fill="#db4437" />
              <path d="M16 16 L29 8.5 A15 15 0 0 1 16 31 Z" fill="#f4c20d" />
              <path d="M16 16 L16 31 A15 15 0 0 1 3 8.5 Z" fill="#0f9d58" />
              <circle cx="16" cy="16" r="7.5" fill="#fff" />
              <circle cx="16" cy="16" r="5.5" fill="#4285f4" />
            </svg>
          </TaskBtn>
          <TaskBtn>
            <svg width="32" height="32" viewBox="0 0 32 32" fill="none" stroke="#f28a0c" strokeWidth="2.4">
              <path d="M6 25 A13 13 0 1 1 13 28 L3 29 Z" />
              <path d="M6 12 L17 19 L28 12" />
            </svg>
          </TaskBtn>
          <TaskBtn>
            <svg width="30" height="33" viewBox="0 0 30 33">
              <polygon points="6,8 24,8 29,17 22,30 15,33 8,30 1,17" fill="#dd1c12" />
              <polygon points="17,9 24,8 29,17 22,30 15,33" fill="#ea4a3f" />
              <polygon points="5,8 11,4 14,6 16,0 19,5 24,5 25,8 15,11" fill="#2c8a35" />
            </svg>
          </TaskBtn>
        </div>
        <div className="ml-[17px]">
          <svg width="31" height="34" viewBox="0 0 31 34">
            <polygon points="3,0 12,9 24,8 31,5 24,18 22,26 10,33 0,27 6,20" fill="#f3a625" />
            <polygon points="3,0 12,9 8,20" fill="#ffd25a" />
            <polygon points="5,20 12,16 14,22 7,25" fill="#8a4a10" />
          </svg>
        </div>
        <div className="ml-[34px]">
          <svg width="24" height="33" viewBox="0 0 24 33">
            <rect x="0.5" y="0.5" width="23" height="32" rx="1" fill="#cfe1f2" stroke="#6d9ac9" />
            <rect x="3" y="3" width="18" height="8" fill="#f3f6fa" stroke="#7fa4ca" />
            <g fill="#4f7fb8">
              <rect x="3" y="14" width="4" height="3" />
              <rect x="8" y="14" width="4" height="3" />
              <rect x="13" y="14" width="4" height="3" />
              <rect x="3" y="19" width="4" height="3" />
              <rect x="8" y="19" width="4" height="3" />
              <rect x="13" y="19" width="4" height="3" />
              <rect x="3" y="24" width="4" height="3" />
              <rect x="8" y="24" width="4" height="3" />
            </g>
            <rect x="18" y="14" width="3" height="16" fill="#d69a48" />
          </svg>
        </div>
        <div className="ml-[35px] flex h-[32px] w-[32px] items-center justify-center bg-[#ef443b]">
          <svg width="20" height="14" viewBox="0 0 20 14">
            <polygon points="7,0 14,7 7,14 0,7" fill="#fff" />
            <polygon points="14,0 20,7 14,14 12,12 16,7 12,2" fill="#fff" />
          </svg>
        </div>
        <div className="flex-1" />
        <div className="flex items-center gap-[8px]">
          <Tray>
            <svg width="16" height="16" viewBox="0 0 16 16">
              <rect x="4" y="0" width="8" height="5" fill="#eee" />
              <rect x="0" y="5" width="16" height="7" fill="#c9ced4" />
              <rect x="4" y="11" width="8" height="5" fill="#f5f5f5" />
              <rect x="6" y="12" width="4" height="3" fill="#2a6fb0" />
            </svg>
          </Tray>
          <Tray>
            <svg width="16" height="16" viewBox="0 0 16 16">
              <circle cx="7" cy="7" r="5.5" fill="none" stroke="#e9a826" strokeWidth="2" />
              <path d="M4 7 L7 3" stroke="#333" strokeWidth="1.5" />
              <circle cx="11" cy="11" r="5" fill="#d7231c" />
              <path d="M9 9 L13 13 M13 9 L9 13" stroke="#fff" strokeWidth="1.4" />
            </svg>
          </Tray>
          <Tray>
            <svg width="16" height="16" viewBox="0 0 16 16">
              <rect width="16" height="16" rx="1" fill="#1e2a2c" />
              <ellipse cx="8" cy="8" rx="5.5" ry="3.5" fill="none" stroke="#7ab800" strokeWidth="2" />
              <circle cx="8" cy="8" r="1.5" fill="#7ab800" />
            </svg>
          </Tray>
          <Tray>
            <svg width="16" height="16" viewBox="0 0 16 16">
              <ellipse cx="9" cy="7" rx="6" ry="6.5" fill="#151515" transform="rotate(-35 9 7)" />
              <circle cx="4" cy="12" r="2.5" fill="#eee" />
              <circle cx="7" cy="5" r="1" fill="#eee" />
            </svg>
          </Tray>
          <Tray>
            <svg width="16" height="16" viewBox="0 0 16 16">
              <rect width="16" height="16" fill="#ef443b" />
              <polygon points="6,4 10,8 6,12 2,8" fill="#fff" />
              <polygon points="10,4 14,8 10,12 9,11 12,8 9,5" fill="#fff" />
            </svg>
          </Tray>
          <Tray>
            <svg width="16" height="16" viewBox="0 0 16 16">
              <rect width="16" height="16" fill="#ee9a2d" />
              <path d="M2 16 C3 8 8 2 15 0" fill="none" stroke="#fbe9c8" strokeWidth="1.4" />
            </svg>
          </Tray>
          <Tray>
            <svg width="16" height="16" viewBox="0 0 16 16" fill="none" stroke="#fff" strokeWidth="1.2">
              <rect x="1" y="1" width="6" height="8" />
              <rect x="6" y="4" width="9" height="7" fill="#7a8fa8" />
              <path d="M4 9 L4 14 M2 15 L14 15 M10 11 L10 15" />
            </svg>
          </Tray>
          <div className="ml-[2px]">
            <Tray>
              <svg width="14" height="16" viewBox="0 0 14 16">
                <polygon points="1,5 4,5 9,1 9,15 4,11 1,11" fill="#f0f0f0" />
                <path d="M11 5 Q13 8 11 11" fill="none" stroke="#dfe5ec" strokeWidth="1" />
              </svg>
            </Tray>
          </div>
          <div className="ml-[1px]">
            <Tray>
              <svg width="16" height="16" viewBox="0 0 16 16">
                <rect x="1" y="0" width="1.5" height="16" fill="#fff" />
                <polygon points="3,1 15,4 11,6 15,8 3,10" fill="#f5f5f5" />
              </svg>
            </Tray>
          </div>
        </div>
        <div className="ml-[18px] mr-[20px] flex w-[57px] flex-col items-center text-[12px] leading-[18px] text-[#eef2f6]">
          <span>15:15</span>
          <span>25/02/2021</span>
        </div>
      </div>

      {/* Cerchiature rosse */}
      <div className="pointer-events-none absolute left-[468px] top-[712px] h-[85px] w-[370px] rounded-[14px] border-2 border-[#f01010]" />
      <div className="pointer-events-none absolute left-[13px] top-[867px] h-[35px] w-[123px] rounded-[12px] border-2 border-[#f01010]" />
    </div>
  );
}
